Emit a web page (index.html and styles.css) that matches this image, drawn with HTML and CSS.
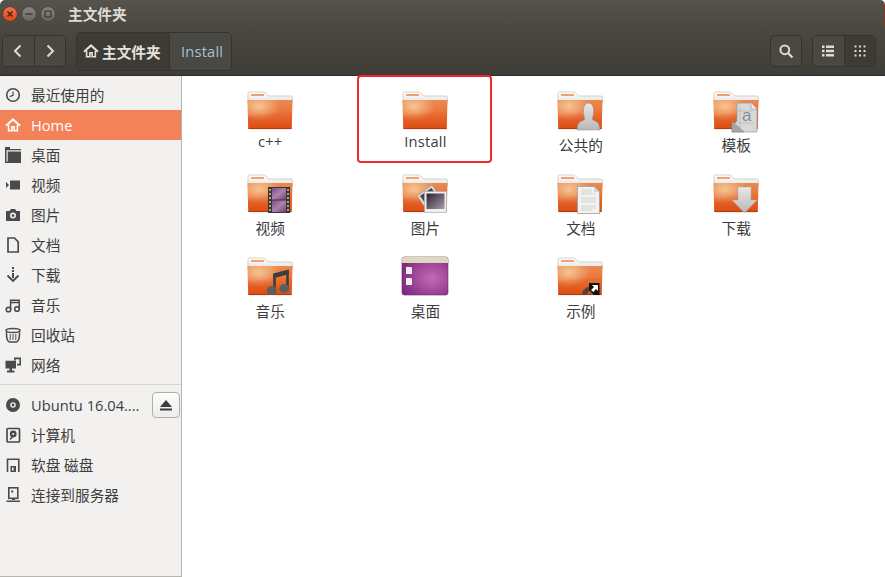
FILE: index.html
```html
<!DOCTYPE html>
<html lang="zh-CN">
<head>
    <meta charset="UTF-8">
    <meta name="viewport" content="width=device-width, initial-scale=1.0">
    <title>主文件夹</title>
    <link rel="stylesheet" href="styles.css">
</head>
<body>
    <svg class="svg-defs" aria-hidden="true">
        <defs>
            <linearGradient id="folderBody" x1="0" y1="0" x2="0" y2="1">
                <stop offset="0" stop-color="#ea8a50"/>
                <stop offset="0.5" stop-color="#e87238"/>
                <stop offset="1" stop-color="#dc4a10"/>
            </linearGradient>
            <radialGradient id="folderGlow" cx="0.25" cy="0.22" r="0.48">
                <stop offset="0" stop-color="#f8d0a0" stop-opacity="0.85"/>
                <stop offset="1" stop-color="#f8d0a0" stop-opacity="0"/>
            </radialGradient>
            <linearGradient id="folderSheet" x1="0" y1="0" x2="0" y2="1">
                <stop offset="0" stop-color="#ffffff"/>
                <stop offset="1" stop-color="#e4e2de"/>
            </linearGradient>
            <linearGradient id="greyPaper" x1="0" y1="0" x2="0" y2="1">
                <stop offset="0" stop-color="#e8e8e6"/>
                <stop offset="1" stop-color="#b8b8b6"/>
            </linearGradient>
            <linearGradient id="filmPurple" x1="0" y1="0" x2="1" y2="1">
                <stop offset="0" stop-color="#7b4f80"/>
                <stop offset="0.5" stop-color="#b07fb2"/>
                <stop offset="1" stop-color="#6c4570"/>
            </linearGradient>
            <linearGradient id="photoDark" x1="0" y1="0" x2="1" y2="1">
                <stop offset="0" stop-color="#2a2230"/>
                <stop offset="1" stop-color="#a89aac"/>
            </linearGradient>
            <radialGradient id="desktopPurple" cx="0.65" cy="0.55" r="0.7">
                <stop offset="0" stop-color="#c768b5"/>
                <stop offset="1" stop-color="#7c2a80"/>
            </radialGradient>

            <symbol id="folder" viewBox="0 0 48 40">
                <path d="M2 2.5Q2 1 3.5 1H18L23 5H45Q46.5 5 46.5 6.5V12H2Z" fill="url(#folderSheet)" stroke="#c4c0b8" stroke-width="0.7"/>
                <rect x="5" y="3" width="13" height="2" fill="#f2a070"/>
                <path d="M1.5 9H46.5L45.8 37Q45.8 38 44.8 38H3.2Q2.2 38 2.2 37Z" fill="url(#folderBody)"/>
                <path d="M1.5 9H46.5L45.8 37Q45.8 38 44.8 38H3.2Q2.2 38 2.2 37Z" fill="url(#folderGlow)"/>
                <path d="M2 25Q24 21 46 21V37.4H2Z" fill="#e04e10" opacity="0.12"/>
                <path d="M2.4 37.6H45.6" stroke="#a83c12" stroke-width="1"/>
            </symbol>

            <symbol id="clock" viewBox="0 0 16 16"><circle cx="8" cy="8" r="6.3" fill="none" stroke="currentColor" stroke-width="1.6"/><path d="M8 4.5V8.3L4.8 9.6" fill="none" stroke="currentColor" stroke-width="1.2"/></symbol>
            <symbol id="home" viewBox="0 0 16 16"><path d="M1 8.8L8 2.4L15 8.8" fill="none" stroke="currentColor" stroke-width="2"/><path d="M3.6 8V13.8H6.9V9.8H9.1V13.8H12.4V8" fill="none" stroke="currentColor" stroke-width="1.6"/></symbol>
            <symbol id="desktopFolder" viewBox="0 0 16 16"><path d="M0 0H5V2H16V16H0Z" fill="currentColor"/><path d="M1.5 3.2H16V4.4H2.7V14.5H1.5Z" fill="#f2f1f0"/></symbol>
            <symbol id="video" viewBox="0 0 16 16"><path d="M1 5L4 8L1 11Z" fill="currentColor"/><path d="M5 3.5H15V12.5H5Z" fill="currentColor"/></symbol>
            <symbol id="camera" viewBox="0 0 16 16"><path fill-rule="evenodd" d="M1 4H4.5L6 2H10L11.5 4H15V14H1ZM8 5.6A3 3 0 1 0 8 11.6A3 3 0 1 0 8 5.6ZM8 7.2A1.4 1.4 0 1 1 8 10A1.4 1.4 0 1 1 8 7.2Z" fill="currentColor"/></symbol>
            <symbol id="doc" viewBox="0 0 16 16"><path d="M3 1H9.5L13.2 4.8V15H3Z" fill="none" stroke="currentColor" stroke-width="1.7"/></symbol>
            <symbol id="download" viewBox="0 0 16 16"><path d="M7 0H9V2H7ZM7 3H9V5H7ZM7 6H9V11H7Z" fill="currentColor"/><path d="M2.5 8.5L8 14L13.5 8.5" fill="none" stroke="currentColor" stroke-width="1.9"/></symbol>
            <symbol id="music" viewBox="0 0 16 16"><path d="M5.6 12V3.2H14.2V11.5M5.6 5.4H14.2" fill="none" stroke="currentColor" stroke-width="1.5"/><circle cx="3.5" cy="12.5" r="2.3" fill="none" stroke="currentColor" stroke-width="1.6"/><circle cx="12" cy="12" r="2.3" fill="none" stroke="currentColor" stroke-width="1.6"/></symbol>
            <symbol id="trash" viewBox="0 0 16 16"><path d="M1.5 5.2Q1.2 15 5 15H11Q14.8 15 14.5 5.2" fill="none" stroke="currentColor" stroke-width="1.5"/><ellipse cx="8" cy="3.4" rx="7" ry="2" fill="none" stroke="currentColor" stroke-width="1.5"/><path d="M5.2 7V13M8 7V13M10.8 7V13" stroke="currentColor" stroke-width="1"/></symbol>
            <symbol id="network" viewBox="0 0 16 16"><path d="M9 0.5H16V8.5H12V6.8H14.4V2.2H10.6V3.5H9Z" fill="currentColor"/><path fill-rule="evenodd" d="M0.5 3.8H11V11.5H7V13.5H9.5V15.5H2V13.5H4.5V11.5H0.5Z" fill="currentColor"/></symbol>
            <symbol id="disc" viewBox="0 0 16 16"><path fill-rule="evenodd" d="M8 1A7 7 0 1 0 8 15A7 7 0 1 0 8 1ZM8 5.2A2.8 2.8 0 1 1 8 10.8A2.8 2.8 0 1 1 8 5.2ZM8 6.6A1.4 1.4 0 1 0 8 9.4A1.4 1.4 0 1 0 8 6.6Z" fill="currentColor"/></symbol>
            <symbol id="drive" viewBox="0 0 16 16"><rect x="2" y="1.5" width="12.5" height="13.5" rx="1" fill="none" stroke="currentColor" stroke-width="1.7"/><circle cx="8.2" cy="7" r="3.4" fill="currentColor"/><circle cx="8.2" cy="7" r="1" fill="#f2f1f0"/><path d="M5 12.5L8 9.2" stroke="currentColor" stroke-width="1.5"/></symbol>
            <symbol id="floppy" viewBox="0 0 16 16"><path d="M2.5 15V2.2H13.8V15" fill="none" stroke="currentColor" stroke-width="1.6"/><path fill-rule="evenodd" d="M5.5 9H11V15H5.5ZM7 10.5V13.5H8.6V10.5Z" fill="currentColor"/></symbol>
            <symbol id="server" viewBox="0 0 16 16"><rect x="3.8" y="0.8" width="9" height="10.5" fill="none" stroke="currentColor" stroke-width="1.6"/><path d="M6.2 3.5H8.2V5.5H6.2Z" fill="currentColor"/><path d="M7 11H10V13H7ZM1.5 13.5H15V15H1.5Z" fill="currentColor"/></symbol>
        </defs>
    </svg>

    <div class="window">
        <header class="titlebar">
            <span class="win-btn win-close"><svg viewBox="0 0 16 16"><path d="M5.5 5.5L10.5 10.5M10.5 5.5L5.5 10.5" stroke="#4a1a0a" stroke-width="1.4"/></svg></span>
            <span class="win-btn"><svg viewBox="0 0 16 16"><path d="M4.5 8H11.5" stroke="#3a3932" stroke-width="1.4"/></svg></span>
            <span class="win-btn"><svg viewBox="0 0 16 16"><rect x="5" y="5" width="6" height="6" fill="none" stroke="#3a3932" stroke-width="1.2"/></svg></span>
            <span class="win-title">主文件夹</span>
        </header>

        <div class="toolbar">
            <div class="btn-group">
                <button class="tool-btn"><svg viewBox="0 0 16 16"><path d="M10.5 2.5L5 8L10.5 13.5" fill="none" stroke="currentColor" stroke-width="2"/></svg></button>
                <button class="tool-btn"><svg viewBox="0 0 16 16"><path d="M5.5 2.5L11 8L5.5 13.5" fill="none" stroke="currentColor" stroke-width="2"/></svg></button>
            </div>
            <div class="pathbar">
                <button class="path-btn path-active"><svg class="path-icon"><use href="#home"/></svg>主文件夹</button>
                <button class="path-btn path-latin">Install</button>
            </div>
            <button class="tool-btn tool-single tool-search"><svg viewBox="0 0 16 16"><circle cx="6.8" cy="6.8" r="4.4" fill="none" stroke="currentColor" stroke-width="2"/><path d="M10 10L14.5 14.5" stroke="currentColor" stroke-width="2.2"/></svg></button>
            <div class="btn-group view-group">
                <button class="tool-btn"><svg viewBox="0 0 16 16"><path d="M2 2.5H4.5V5H2ZM6 2.5H14V5H6ZM2 6.8H4.5V9.3H2ZM6 6.8H14V9.3H6ZM2 11H4.5V13.5H2ZM6 11H14V13.5H6Z" fill="currentColor"/></svg></button>
                <button class="tool-btn tool-active"><svg viewBox="0 0 16 16"><path d="M2.5 2.5H4.5V4.5H2.5ZM7 2.5H9V4.5H7ZM11.5 2.5H13.5V4.5H11.5ZM2.5 7H4.5V9H2.5ZM7 7H9V9H7ZM11.5 7H13.5V9H11.5ZM2.5 11.5H4.5V13.5H2.5ZM7 11.5H9V13.5H7ZM11.5 11.5H13.5V13.5H11.5Z" fill="currentColor"/></svg></button>
            </div>
        </div>

        <div class="content">
            <nav class="sidebar">
                <a class="side-row"><svg class="side-icon"><use href="#clock"/></svg><span>最近使用的</span></a>
                <a class="side-row side-active"><svg class="side-icon"><use href="#home"/></svg><span class="side-latin">Home</span></a>
                <a class="side-row"><svg class="side-icon"><use href="#desktopFolder"/></svg><span>桌面</span></a>
                <a class="side-row"><svg class="side-icon"><use href="#video"/></svg><span>视频</span></a>
                <a class="side-row"><svg class="side-icon"><use href="#camera"/></svg><span>图片</span></a>
                <a class="side-row"><svg class="side-icon"><use href="#doc"/></svg><span>文档</span></a>
                <a class="side-row"><svg class="side-icon"><use href="#download"/></svg><span>下载</span></a>
                <a class="side-row"><svg class="side-icon"><use href="#music"/></svg><span>音乐</span></a>
                <a class="side-row"><svg class="side-icon"><use href="#trash"/></svg><span>回收站</span></a>
                <a class="side-row"><svg class="side-icon"><use href="#network"/></svg><span>网络</span></a>
                <div class="side-sep"></div>
                <a class="side-row"><svg class="side-icon"><use href="#disc"/></svg><span class="side-latin side-grow">Ubuntu 16.04....</span>
                    <button class="eject-btn"><svg viewBox="0 0 16 16"><path d="M8 3L14 10H2ZM2 11.5H14V13.5H2Z" fill="currentColor"/></svg></button></a>
                <a class="side-row"><svg class="side-icon"><use href="#drive"/></svg><span>计算机</span></a>
                <a class="side-row"><svg class="side-icon"><use href="#floppy"/></svg><span>软盘 磁盘</span></a>
                <a class="side-row"><svg class="side-icon"><use href="#server"/></svg><span>连接到服务器</span></a>
            </nav>

            <main class="file-grid">
                <div class="file-item">
                    <svg class="file-icon" viewBox="0 0 48 40"><use href="#folder"/></svg>
                    <div class="file-name file-name-latin">c++</div>
                </div>
                <div class="file-item file-marked">
                    <svg class="file-icon" viewBox="0 0 48 40"><use href="#folder"/></svg>
                    <div class="file-name file-name-latin">Install</div>
                </div>
                <div class="file-item">
                    <svg class="file-icon" viewBox="0 0 48 40"><use href="#folder"/>
                        <path d="M21 39Q21 31 27 29.5Q29.5 28.5 28.5 26.5Q26.8 23 27.5 18Q28.5 12 32.5 12Q36.5 12 37.5 18Q38.2 23 36.5 26.5Q35.5 28.5 38 29.5Q44 31 44 39Z" fill="url(#greyPaper)" stroke="#8e8e8c" stroke-width="0.5"/>
                    </svg>
                    <div class="file-name">公共的</div>
                </div>
                <div class="file-item">
                    <svg class="file-icon" viewBox="0 0 48 40"><use href="#folder"/>
                        <path d="M25 12H39L45 18V41H20V35L25 30Z" fill="#d6d8da" stroke="#9a9ca0" stroke-width="0.7"/>
                        <path d="M39 12V18H45" fill="#f2f2f2" stroke="#9a9ca0" stroke-width="0.7"/>
                        <path d="M28 16V37M26 20H41M26 32H42" stroke="#a8aab0" stroke-width="0.5"/>
                        <text class="emblem-letter" x="30" y="30">a</text>
                        <path d="M20 41V30L32 41Z" fill="#a4a6aa" stroke="#85878c" stroke-width="0.5"/>
                    </svg>
                    <div class="file-name">模板</div>
                </div>

                <div class="file-item">
                    <svg class="file-icon" viewBox="0 0 48 40"><use href="#folder"/>
                        <rect x="22" y="13" width="22" height="26" fill="#3a3634"/>
                        <rect x="26" y="14" width="14" height="11.5" fill="url(#filmPurple)"/>
                        <rect x="26" y="26.5" width="14" height="11.5" fill="url(#filmPurple)"/>
                        <path d="M23 15H25V17H23ZM23 19H25V21H23ZM23 23H25V25H23ZM23 27H25V29H23ZM23 31H25V33H23ZM23 35H25V37H23ZM41 15H43V17H41ZM41 19H43V21H41ZM41 23H43V25H41ZM41 27H43V29H41ZM41 31H43V33H41ZM41 35H43V37H41Z" fill="#b89a80"/>
                    </svg>
                    <div class="file-name">视频</div>
                </div>
                <div class="file-item">
                    <svg class="file-icon" viewBox="0 0 48 40"><use href="#folder"/>
                        <path d="M16 22L31 11L38 21L23 32Z" fill="#d8d8d6" stroke="#8a8a88" stroke-width="0.5"/>
                        <path d="M19 22L30.5 14L35 21L24 29Z" fill="#4a4450"/>
                        <rect x="23.5" y="17.5" width="22" height="21" fill="#efefed" stroke="#a8a8a6" stroke-width="0.6"/>
                        <rect x="25.5" y="19.5" width="18" height="15.5" fill="url(#photoDark)"/>
                    </svg>
                    <div class="file-name">图片</div>
                </div>
                <div class="file-item">
                    <svg class="file-icon" viewBox="0 0 48 40"><use href="#folder"/>
                        <path d="M21.5 12.5H38L43.5 18V39.5H21.5Z" fill="#f2f2f0" stroke="#a0a09e" stroke-width="0.8"/>
                        <path d="M38 12.5V18H43.5Z" fill="#d4d4d2"/>
                        <path d="M25 16H36M25 18H36M25 20H39M25 24H40M25 26H40M25 28H40M25 32H40M25 34H40M25 36H36" stroke="#b4b4b2" stroke-width="0.5"/>
                    </svg>
                    <div class="file-name">文档</div>
                </div>
                <div class="file-item">
                    <svg class="file-icon" viewBox="0 0 48 40"><use href="#folder"/>
                        <path d="M26 13H39V26H45L32.5 39L20 26H26Z" fill="url(#greyPaper)" stroke="#a8a8a6" stroke-width="0.5"/>
                    </svg>
                    <div class="file-name">下载</div>
                </div>

                <div class="file-item">
                    <svg class="file-icon" viewBox="0 0 48 40"><use href="#folder"/>
                        <path d="M28.5 34V17.5M41.5 31V13.5" fill="none" stroke="#3e3e3e" stroke-width="2.6"/>
                        <path d="M27.2 21.5L42.8 17V12.4L27.2 16.4Z" fill="#3e3e3e"/>
                        <ellipse cx="25.7" cy="33.7" rx="5" ry="4.4" fill="#5e5e5e"/>
                        <ellipse cx="38.3" cy="31.5" rx="5" ry="4.4" fill="#5e5e5e"/>
                    </svg>
                    <div class="file-name">音乐</div>
                </div>
                <div class="file-item">
                    <svg class="file-icon" viewBox="0 0 48 40">
                        <rect x="1" y="0" width="46" height="38" rx="2.5" fill="url(#desktopPurple)" stroke="#6d2570" stroke-width="0.6"/>
                        <path d="M1 2.5Q1 0 3.5 0H44.5Q47 0 47 2.5V6H1Z" fill="#dcd9bf"/>
                        <path d="M5 10H10L11 11V17H5ZM5 21H10L11 22V28H5Z" fill="#f0ecf0"/>
                    </svg>
                    <div class="file-name">桌面</div>
                </div>
                <div class="file-item">
                    <svg class="file-icon" viewBox="0 0 48 40"><use href="#folder"/>
                        <path d="M26 35Q31 28 38 29V33Q33 32 30.5 38H27Z" fill="#57413a"/>
                        <path d="M33 26H43.5V38H38L33 33Z" fill="#111"/>
                        <path d="M36 28H42V34L40 32L37.5 35L35 33L38 30Z" fill="#fff"/>
                    </svg>
                    <div class="file-name">示例</div>
                </div>
            </main>
        </div>
    </div>
</body>
</html>
```

FILE: styles.css
```css
html, body {
    margin: 0;
    padding: 0;
    height: 100%;
    overflow: hidden;
}
body {
    font-family: "Open Sans", "Noto Sans CJK SC", sans-serif;
    font-size: 14.67px;
    background-color: #ffffff;
}
.svg-defs {
    display: block;
    width: 0;
    height: 0;
}
.window {
    height: 577px;
    display: flex;
    flex-direction: column;
}

/* title bar */
.titlebar {
    height: 28px;
    box-sizing: border-box;
    padding-left: 2px;
    display: flex;
    align-items: center;
    gap: 3px;
    background: linear-gradient(#55534b, #4a4841);
    border-right: 1px solid #7c3a28;
    border-top-left-radius: 5px;
    border-top-right-radius: 5px;
}
.win-btn {
    width: 16px;
    height: 16px;
    border-radius: 50%;
    background: linear-gradient(#8a8880, #66645c);
    box-shadow: inset 0 0 0 1px #3f3e38;
}
.win-btn svg {
    display: block;
    width: 16px;
    height: 16px;
}
.win-close {
    background: linear-gradient(#f2764a, #d8471a);
}
.win-title {
    margin-left: 9px;
    padding-bottom: 2px;
    color: #dfdbd2;
    font-weight: bold;
}

/* toolbar */
.toolbar {
    height: 48px;
    box-sizing: border-box;
    padding: 0 9px 1px 2px;
    display: flex;
    align-items: center;
    background: linear-gradient(#4a4841, #3e3d37);
    border-bottom: 1px solid #2e2d29;
}
.btn-group {
    display: flex;
    width: 64px;
    height: 32px;
    border: 1px solid #34332e;
    border-radius: 5px;
    box-sizing: border-box;
    overflow: hidden;
}
.tool-btn {
    flex: 1;
    width: 32px;
    height: 30px;
    padding: 0;
    border: none;
    border-left: 1px solid #34332e;
    background-color: #4a4842;
    color: #dfdbd2;
    display: flex;
    align-items: center;
    justify-content: center;
}
.tool-btn:first-child {
    border-left: none;
}
.tool-btn svg {
    width: 16px;
    height: 16px;
}
.tool-active {
    background-color: #3c3b36;
}
.tool-single {
    flex: none;
    box-sizing: border-box;
    height: 32px;
    border: 1px solid #34332e;
    border-radius: 5px;
}
.tool-search {
    margin-left: auto;
}
.view-group {
    margin-left: 10px;
}
.pathbar {
    margin-left: 10px;
    width: 156px;
    height: 39px;
    box-sizing: border-box;
    display: flex;
    border: 1px solid #34332e;
    border-radius: 5px;
    overflow: hidden;
}
.path-btn {
    padding: 0 8px 0 6px;
    border: none;
    font: inherit;
    color: #a8c0d0;
    background-color: #4a4842;
    display: flex;
    align-items: center;
}
.path-active {
    width: 93px;
    flex-shrink: 0;
    box-sizing: border-box;
    color: #e6e2d9;
    font-weight: bold;
    background-color: #3c3b36;
    border-right: 1px solid #34332e;
}
.path-latin {
    flex: 1;
    padding-left: 11px;
    letter-spacing: 0.2px;
}
.path-icon {
    width: 16px;
    height: 16px;
    margin-right: 3px;
    flex-shrink: 0;
}

/* sidebar */
.content {
    flex: 1;
    display: flex;
    min-height: 0;
}
.sidebar {
    width: 182px;
    box-sizing: border-box;
    flex-shrink: 0;
    padding-top: 4px;
    background-color: #f2f1f0;
    border-right: 1px solid #b6b4ae;
    border-bottom: 1px solid #b6b4ae;
    color: #3e3e3e;
}
.side-row {
    height: 30px;
    padding-left: 5px;
    display: flex;
    align-items: center;
}
.side-row span {
    padding-bottom: 2px;
}
.side-row .side-latin {
    padding-bottom: 0;
}
.side-active {
    color: #ffffff;
    background-color: #f48258;
}
.side-icon {
    width: 16px;
    height: 16px;
    margin-right: 10px;
    flex-shrink: 0;
    color: #4a4a4a;
}
.side-active .side-icon {
    color: #ffffff;
}
.side-grow {
    flex: 1;
    white-space: nowrap;
}
.side-sep {
    height: 1px;
    margin: 4px 0 5px;
    background-color: #d8d6d2;
}
.eject-btn {
    width: 28px;
    height: 26px;
    margin-right: 1px;
    padding: 0;
    border: 1px solid #b0aeaa;
    border-radius: 4px;
    background: linear-gradient(#fbfbfa, #eeedeb);
    color: #3c3c3c;
    display: flex;
    align-items: center;
    justify-content: center;
}
.eject-btn svg {
    width: 16px;
    height: 16px;
}

/* icon grid */
.file-grid {
    flex: 1;
    padding: 15px 0 0 10px;
    background-color: #ffffff;
    display: grid;
    grid-template-columns: repeat(4, 155.33px);
    grid-auto-rows: 83px;
}
.file-item {
    position: relative;
    display: flex;
    flex-direction: column;
    align-items: center;
}
.file-icon {
    width: 48px;
    height: 40px;
    display: block;
    overflow: visible;
}
.file-name {
    margin-top: 4px;
    padding-left: 1px;
    line-height: 20px;
    color: #3c3c3c;
}
.file-name-latin {
    margin-top: 0;
    letter-spacing: 0.25px;
}
.file-marked::after {
    content: "";
    position: absolute;
    left: 10px;
    top: -16px;
    width: 131px;
    height: 84px;
    border: 2px solid #f4282a;
    border-radius: 4px;
}
.emblem-letter {
    font-family: "Liberation Sans", sans-serif;
    font-size: 17px;
    fill: #8a8c92;
}
```
